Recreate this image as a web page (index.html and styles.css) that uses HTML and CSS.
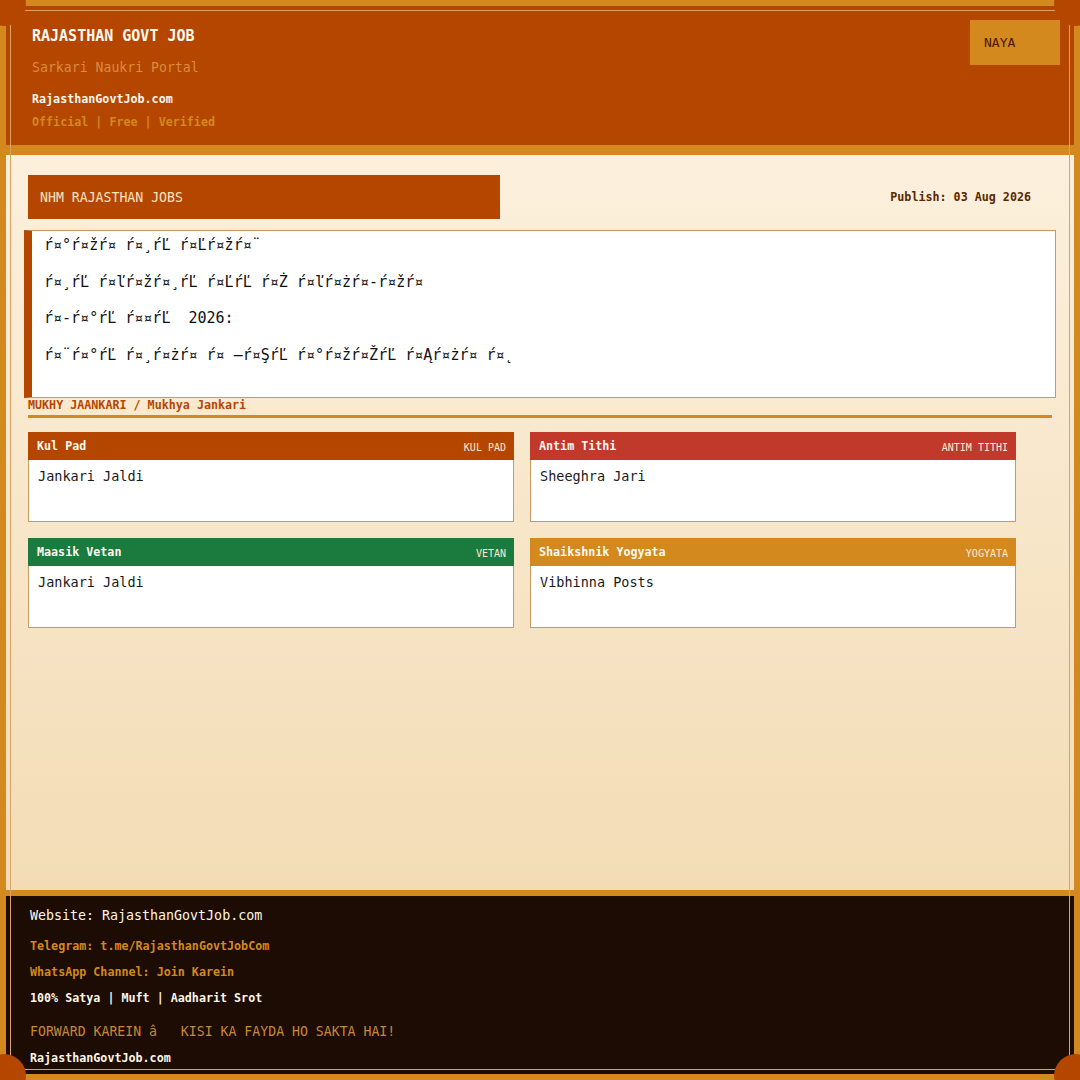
FILE: index.html
```html
<!DOCTYPE html>
<html lang="hi">
<head>
    <meta charset="UTF-8">
    <meta name="viewport" content="width=device-width, initial-scale=1.0">
    <title>NHM Rajasthan Jobs - RajasthanGovtJob.com</title>
    <link rel="stylesheet" href="styles.css">
</head>
<body>
    <!-- decorative page border with round corner studs -->
    <div class="frame">
        <span class="corner corner-tl"></span>
        <span class="corner corner-tr"></span>
        <span class="corner corner-bl"></span>
        <span class="corner corner-br"></span>
    </div>

    <header class="site-header">
        <div class="brand">
            <div class="brand-title">RAJASTHAN GOVT JOB</div>
            <div class="brand-sub">Sarkari Naukri Portal</div>
            <div class="brand-site">RajasthanGovtJob.com</div>
            <div class="brand-tags">Official | Free | Verified</div>
        </div>
        <div class="badge-new">NAYA</div>
    </header>

    <main class="page">
        <div class="post-head">
            <h1 class="post-title">NHM RAJASTHAN JOBS</h1>
            <span class="post-date">Publish: 03 Aug 2026</span>
        </div>

        <div class="post-body">
            <p>ŕ¤°ŕ¤žŕ¤ ŕ¤¸ŕĽ ŕ¤Ľŕ¤žŕ¤¨</p>
            <p>ŕ¤¸ŕĽ ŕ¤ľŕ¤žŕ¤¸ŕĽ ŕ¤ĽŕĽ ŕ¤Ż ŕ¤ľŕ¤żŕ¤-ŕ¤žŕ¤</p>
            <p>ŕ¤-ŕ¤°ŕĽ ŕ¤¤ŕĽ  2026:</p>
            <p>ŕ¤¨ŕ¤°ŕĽ ŕ¤¸ŕ¤żŕ¤ ŕ¤ –ŕ¤ŞŕĽ ŕ¤°ŕ¤žŕ¤ŽŕĽ ŕ¤Ąŕ¤żŕ¤ ŕ¤˛</p>
        </div>

        <h2 class="section-label">MUKHY JAANKARI / Mukhya Jankari</h2>

        <div class="info-grid">
            <div class="info-card">
                <div class="card-head head-brown">
                    <span class="card-title">Kul Pad</span>
                    <span class="card-tag">KUL PAD</span>
                </div>
                <div class="card-body">Jankari Jaldi</div>
            </div>
            <div class="info-card">
                <div class="card-head head-red">
                    <span class="card-title">Antim Tithi</span>
                    <span class="card-tag">ANTIM TITHI</span>
                </div>
                <div class="card-body">Sheeghra Jari</div>
            </div>
            <div class="info-card">
                <div class="card-head head-green">
                    <span class="card-title">Maasik Vetan</span>
                    <span class="card-tag">VETAN</span>
                </div>
                <div class="card-body">Jankari Jaldi</div>
            </div>
            <div class="info-card">
                <div class="card-head head-orange">
                    <span class="card-title">Shaikshnik Yogyata</span>
                    <span class="card-tag">YOGYATA</span>
                </div>
                <div class="card-body">Vibhinna Posts</div>
            </div>
        </div>
    </main>

    <footer class="site-footer">
        <div class="foot-site">Website: RajasthanGovtJob.com</div>
        <div class="foot-link first">Telegram: t.me/RajasthanGovtJobCom</div>
        <div class="foot-link">WhatsApp Channel: Join Karein</div>
        <div class="foot-note">100% Satya | Muft | Aadharit Srot</div>
        <div class="foot-share">FORWARD KAREIN â   KISI KA FAYDA HO SAKTA HAI!</div>
        <div class="foot-brand">RajasthanGovtJob.com</div>
    </footer>
</body>
</html>
```

FILE: styles.css
```css
body {
    margin: 0;
    min-height: 100vh;
    display: flex;
    flex-direction: column;
    font-family: "DejaVu Sans Mono", "Liberation Mono", monospace;
    background: #f3dcb5;
    color: #1a1a1a;
}

/* page border */
.frame {
    position: fixed;
    inset: 0;
    border: 6px solid #d4891e;
    pointer-events: none;
    z-index: 10;
}
.frame::after {
    content: "";
    position: absolute;
    inset: 4px;
    border: 1px solid #dba266;
}
.corner {
    position: absolute;
    width: 44px;
    height: 44px;
    border-radius: 50%;
    background: #b54600;
    z-index: 1;
}
.corner-tl { top: -24px; left: -24px; }
.corner-tr { top: -24px; right: -24px; }
.corner-bl { bottom: -24px; left: -24px; }
.corner-br { bottom: -24px; right: -24px; }

/* header */
.site-header {
    display: flex;
    justify-content: space-between;
    align-items: flex-start;
    padding: 0 20px 16px 32px;
    background: #b54600;
    border-bottom: 10px solid #d4891e;
}
.brand {
    padding-top: 27px;
}
.brand-title {
    font-size: 15px;
    line-height: 18px;
    font-weight: bold;
    color: #fff8ee;
}
.brand-sub {
    margin-top: 15px;
    font-size: 13.2px;
    line-height: 16px;
    color: #d98c3e;
}
.brand-site {
    margin-top: 16px;
    font-size: 11.7px;
    line-height: 14px;
    font-weight: bold;
    color: #fff8ee;
}
.brand-tags {
    margin-top: 9px;
    font-size: 11.7px;
    line-height: 14px;
    font-weight: bold;
    color: #d4891e;
}
.badge-new {
    margin-top: 20px;
    width: 90px;
    height: 45px;
    box-sizing: border-box;
    padding-left: 14px;
    display: flex;
    align-items: center;
    background: #d4891e;
    color: #4a1400;
    font-size: 13px;
}

/* main content */
.page {
    flex: 1;
    padding: 20px 24px;
    background: linear-gradient(180deg, #fcf0dd 0%, #f3dcb5 100%);
}
.post-head {
    display: flex;
    justify-content: space-between;
    align-items: center;
    margin: 0 25px 11px 4px;
}
.post-title {
    width: 472px;
    height: 44px;
    box-sizing: border-box;
    margin: 0;
    padding: 0 12px;
    display: flex;
    align-items: center;
    background: #b54600;
    color: #fbe3c0;
    font-size: 13.2px;
    font-weight: normal;
}
.post-date {
    font-size: 11.7px;
    font-weight: bold;
    color: #5a2800;
}
.post-body {
    padding: 5px 12px 15px;
    background: #fff;
    border: 1px solid #c9995f;
    border-left: 8px solid #b54600;
}
.post-body p {
    margin: 0 0 18.5px;
    font-size: 15px;
    line-height: 18px;
    white-space: pre;
    color: #111;
}
.section-label {
    margin: 0 4px;
    padding-bottom: 3px;
    border-bottom: 3px solid #d4891e;
    font-size: 11.7px;
    line-height: 14px;
    color: #b54600;
}

/* info cards */
.info-grid {
    display: grid;
    grid-template-columns: 486px 486px;
    gap: 16px;
    margin: 14px 0 0 4px;
}
.card-head {
    height: 28px;
    box-sizing: border-box;
    padding: 0 8px 0 9px;
    display: flex;
    justify-content: space-between;
    align-items: center;
    color: #fff8ee;
}
.head-brown { background: #b54600; }
.head-red { background: #c0392b; }
.head-green { background: #1b7a3e; }
.head-orange { background: #d4891e; }
.card-title {
    font-size: 11.7px;
    font-weight: bold;
}
.card-tag {
    margin-top: 3px;
    font-size: 10px;
    color: #fde9d2;
}
.card-body {
    height: 62px;
    box-sizing: border-box;
    padding: 8px 9px;
    background: #fff;
    border: 1px solid #c9995f;
    border-top: none;
    font-size: 13.5px;
    line-height: 16px;
}

/* footer */
.site-footer {
    padding: 12px 30px 15px;
    background: #1c0c03;
    border-top: 6px solid #d4891e;
    color: #fff5e6;
}
.foot-site {
    font-size: 13.3px;
    line-height: 16px;
}
.foot-link,
.foot-note,
.foot-brand {
    margin-top: 12px;
    font-size: 11.7px;
    line-height: 14px;
    font-weight: bold;
}
.foot-link {
    color: #d4891e;
}
.foot-link.first {
    margin-top: 15px;
}
.foot-share {
    margin-top: 19px;
    font-size: 13.2px;
    line-height: 16px;
    white-space: pre;
    color: #c8873a;
}
.foot-brand {
    margin-top: 11px;
}
```
